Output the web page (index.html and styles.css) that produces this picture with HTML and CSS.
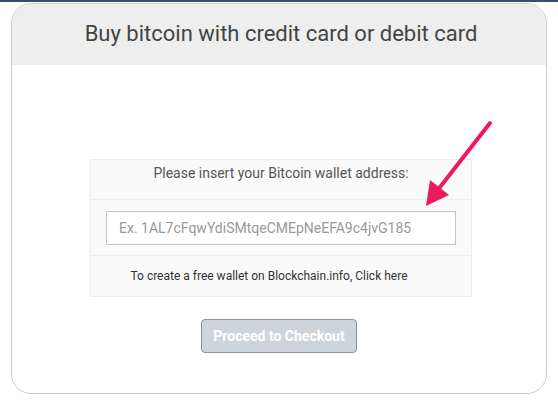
FILE: index.html
```html
<!DOCTYPE html>
<html>
    <head>
        <link rel="stylesheet" href="styles.css">
    </head>
    <body>
        <div class="topbar"></div>
        <div class="card">
            <div class="card-head">
                <h1>Buy bitcoin with credit card or debit card</h1>
            </div>
            <div class="card-body">
                <table class="wallet">
                    <tr>
                        <td class="label">Please insert your Bitcoin wallet address:</td>
                    </tr>
                    <tr>
                        <td class="field">
                            <input type="text" placeholder="Ex. 1AL7cFqwYdiSMtqeCMEpNeEFA9c4jvG185">
                        </td>
                    </tr>
                    <tr>
                        <td class="hint">To create a free wallet on Blockchain.info, Click here</td>
                    </tr>
                </table>
                <button class="checkout">Proceed to Checkout</button>
            </div>
            <svg class="arrow" width="80" height="100" viewBox="0 0 80 100">
                <line x1="73" y1="10" x2="20" y2="78" stroke="#ec1b5c" stroke-width="4" stroke-linecap="round"/>
                <polygon points="9,93 13,67 32,82" fill="#ec1b5c"/>
            </svg>
        </div>
    </body>
</html>
```

FILE: styles.css
```css
*{
    box-sizing: border-box;
}
body{
    margin: 0;
    background: #fff;
    font-family: Roboto, 'Liberation Sans', sans-serif;
    width: 558px;
    height: 400px;
    overflow: hidden;
}
.topbar{
    height: 2px;
    background: #34506d;
}
.card{
    position: relative;
    margin: 1px 11px 0 11px;
    width: 536px;
    height: 391px;
    border: 1px solid #ccc;
    border-radius: 20px;
    overflow: hidden;
}
.card-head{
    background: #eee;
    height: 61px;
    display: flex;
    align-items: center;
    justify-content: center;
    padding: 0 0 3px 4px;
}
.card-head h1{
    margin: 0;
    font-weight: 400;
    font-size: 22px;
    color: #444;
}
.card-body{
    display: flex;
    flex-direction: column;
    align-items: center;
    padding-top: 94px;
}
.wallet{
    width: 382px;
    margin-left: 4px;
    border-collapse: collapse;
    background: #fafafa;
}
.wallet td{
    border: 1px solid #eee;
    text-align: center;
}
.wallet .label{
    height: 40px;
    font-size: 14px;
    color: #555;
    vertical-align: top;
    padding-top: 5px;
}
.wallet .field{
    height: 56px;
    padding: 0 15px;
}
.wallet input{
    display: block;
    width: 350px;
    height: 34px;
    border: 1px solid #c4c4c4;
    background: #fff;
    padding: 0 12px;
    font-family: Roboto, 'Liberation Sans', sans-serif;
    font-size: 14px;
}
.wallet input::placeholder{
    color: #999;
}
.wallet .hint{
    height: 41px;
    padding-right: 25px;
    font-size: 12px;
    color: #333;
}
.checkout{
    margin-top: 22px;
    width: 156px;
    height: 34px;
    background: #ccd5db;
    border: 1px solid #8d959b;
    border-radius: 4px;
    color: #fff;
    font-family: Roboto, 'Liberation Sans', sans-serif;
    font-weight: 700;
    font-size: 14px;
}
.arrow{
    position: absolute;
    left: 405px;
    top: 109px;
}
```
